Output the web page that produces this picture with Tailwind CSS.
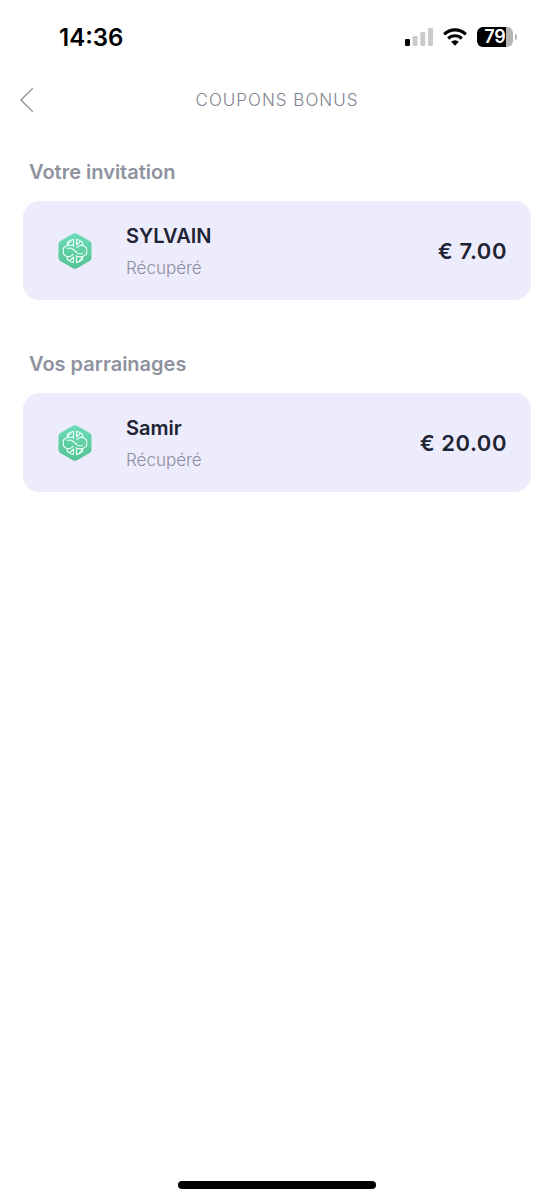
<!DOCTYPE html>
<html lang="fr">
<head>
    <meta charset="UTF-8">
    <meta name="viewport" content="width=device-width, initial-scale=1.0">
    <title>Coupons bonus</title>

    <script src="https://cdn.jsdelivr.net/npm/@tailwindcss/browser@4"></script>
</head>
<body class="bg-white font-['Inter',sans-serif]">
    <div class="flex min-h-screen flex-col">
        <!-- Status bar -->
        <div class="flex h-[74px] items-center justify-between pr-[37px] pl-[59px] text-black">
            <span class="pt-[2px] text-2xl font-semibold">14:36</span>
            <div class="flex items-center gap-[10px]">
                <svg class="h-[18px] w-7" viewBox="0 0 28 18" aria-hidden="true">
                    <rect x="0" y="11" width="5" height="7" rx="1.3" fill="#000"/>
                    <rect x="7.6" y="8" width="5" height="10" rx="1.3" fill="#cbcbcb"/>
                    <rect x="15.3" y="4" width="5" height="14" rx="1.3" fill="#cbcbcb"/>
                    <rect x="23" y="0" width="5" height="18" rx="1.3" fill="#cbcbcb"/>
                </svg>
                <svg class="h-[18px] w-6" viewBox="0 0 24 18" fill="none" stroke="#000" aria-hidden="true">
                    <path d="M1.2 6.3a15.6 15.6 0 0 1 21.6 0" stroke-width="3.2"/>
                    <path d="M5.2 10.5a9.9 9.9 0 0 1 13.6 0" stroke-width="3.1"/>
                    <path d="M12 17.8l-3.9-4a5.6 5.6 0 0 1 7.8 0z" fill="#000" stroke="none"/>
                </svg>
                <div class="flex items-center gap-[2px]">
                    <div class="flex h-5 w-9 items-center justify-center rounded-md bg-linear-to-r from-black from-80% to-[#b4b4b4] to-80% text-lg font-semibold text-white">79</div>
                    <div class="h-[6px] w-[2px] rounded-r-full bg-[#b4b4b4]"></div>
                </div>
            </div>
        </div>

        <!-- Header -->
        <header class="grid h-[52px] grid-cols-[60px_1fr_60px] items-center">
            <button type="button" aria-label="Retour" class="flex h-full items-center pl-5">
                <svg class="h-6 w-[14px]" viewBox="0 0 14 24" fill="none" stroke="#858994" stroke-width="1.3">
                    <path d="M12.7 0.4L0.9 12l11.8 11.6"/>
                </svg>
            </button>
            <h1 class="pt-[2px] text-center text-[17px] font-light tracking-[1px] text-[#7f8491]">COUPONS BONUS</h1>
        </header>

        <!-- Coupons -->
        <main class="flex grow flex-col gap-[50px] px-[23px] pt-[32px]">
            <section>
                <h2 class="mb-[15px] pl-[6px] text-xl leading-7 font-semibold text-[#8e929e]">Votre invitation</h2>
                <div class="flex items-center rounded-2xl bg-[#edecfc] py-[19px] pr-6 pl-[35px]">
                    <svg class="h-9 w-[34px]" viewBox="0 0 34 36" aria-hidden="true">
                        <defs>
                            <linearGradient id="hex" x1="0" y1="0" x2="0" y2="1">
                                <stop offset="0" stop-color="#6cdcb7"/>
                                <stop offset="1" stop-color="#56c294"/>
                            </linearGradient>
                        </defs>
                        <g id="logo">
                            <path d="M15 .8q2-1.1 4 0l12.7 7.1q1.8 1 1.8 3v14.2q0 2-1.8 3L19 35.2q-2 1.1-4 0L2.3 28.1q-1.8-1-1.8-3V10.900q0-2 1.8-3z" fill="url(#hex)"/>
                            <g fill="none" stroke="#e9fff6" stroke-width="1.1" stroke-linejoin="round" stroke-linecap="round">
                                <g id="half">
                                    <path d="M15.500 13.500V6.600H14L9.400 9.300V12.400H15.500M13.500 7L9.600 12.200"/>
                                    <path d="M17 18l-3.200-2.700H9.300M9.300 12.400L5.400 15v6l3.400 2.600h3.400l3-2.300"/>
                                    <path d="M15.500 24v5.400H14L9.400 26.700V23.600M15.300 24.200l-3.800 3.800"/>
                                </g>
                                <use href="#half" transform="rotate(180 17 18)"/>
                            </g>
                        </g>
                    </svg>
                    <div class="ml-[34px] grow">
                        <h3 class="text-xl leading-8 font-semibold text-[#202334]">SYLVAIN</h3>
                        <p class="pt-[3px] text-[17px] leading-[26px] font-light text-[#8e8e9f]">Récupéré</p>
                    </div>
                    <span class="text-[22px] leading-7 font-semibold tracking-wide text-[#202334]">€ 7.00</span>
                </div>
            </section>

            <section>
                <h2 class="mb-[15px] pl-[6px] text-xl leading-7 font-semibold text-[#8e929e]">Vos parrainages</h2>
                <div class="flex items-center rounded-2xl bg-[#edecfc] py-[19px] pr-6 pl-[35px]">
                    <svg class="h-9 w-[34px]" viewBox="0 0 34 36" aria-hidden="true">
                        <use href="#logo"/>
                    </svg>
                    <div class="ml-[34px] grow">
                        <h3 class="text-xl leading-8 font-semibold text-[#202334]">Samir</h3>
                        <p class="pt-[3px] text-[17px] leading-[26px] font-light text-[#8e8e9f]">Récupéré</p>
                    </div>
                    <span class="text-[22px] leading-7 font-semibold tracking-wide text-[#202334]">€ 20.00</span>
                </div>
            </section>
        </main>

        <!-- Home indicator -->
        <div class="flex justify-center pb-[11px]">
            <div class="h-2 w-[198px] rounded-full bg-black"></div>
        </div>
    </div>
</body>
</html>
